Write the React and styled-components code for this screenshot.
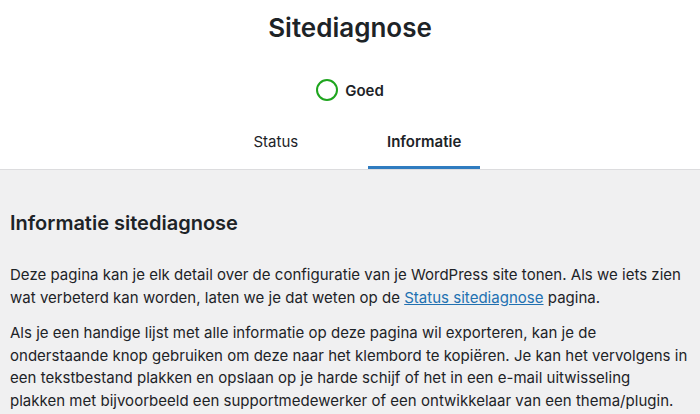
import React from "react";
import styled, { createGlobalStyle } from "styled-components";

const Global = createGlobalStyle`
  html, body { margin: 0; padding: 0; }
  body {
    background: #f0f0f1;
    font-family: Inter, "Noto Sans", sans-serif;
    color: #1d2327;
    width: 700px;
    height: 414px;
    overflow: hidden;
  }
`;

const Header = styled.header`
  background: #fff;
  border-bottom: 1px solid #dcdcde;
  text-align: center;
`;

const Title = styled.h1`
  margin: 0;
  padding-top: 13px;
  height: 29px;
  line-height: 29px;
  font-size: 26px;
  font-weight: 600;
  color: #1d2327;
`;

const StatusRow = styled.div`
  display: flex;
  align-items: center;
  justify-content: center;
  gap: 7px;
  margin-top: 28px;
  height: 40px;
`;

const Circle = styled.span`
  width: 18px;
  height: 18px;
  border: 2px solid #1ea51e;
  border-radius: 50%;
`;

const StatusLabel = styled.span`
  font-size: 15px;
  font-weight: 600;
`;

const Tabs = styled.nav`
  display: inline-grid;
  grid-template-columns: 1fr 1fr;
  margin-top: 12px;
`;

const Tab = styled.a`
  display: block;
  margin: 0 18px;
  padding: 9px 19px 16px;
  line-height: 22px;
  font-size: 15px;
  font-weight: ${(p) => (p.$active ? 600 : 400)};
  color: #1d2327;
  text-decoration: none;
  box-shadow: ${(p) => (p.$active ? "inset 0 -3px #2f7cc0" : "none")};
`;

const Body = styled.main`
  padding: 39px 0 0 10px;
`;

const Heading = styled.h2`
  margin: 0 0 27px;
  font-size: 20px;
  line-height: 28px;
  font-weight: 600;
`;

const Para = styled.p`
  margin: 0 0 13px;
  font-size: 15px;
  line-height: 22.6px;
  letter-spacing: 0.02px;
`;

const Link = styled.a`
  color: #2271b1;
  text-decoration: underline;
`;

export default function App() {
  return (
    <>
      <Global />
      <Header>
        <Title>Sitediagnose</Title>
        <StatusRow>
          <Circle />
          <StatusLabel>Goed</StatusLabel>
        </StatusRow>
        <Tabs>
          <Tab>Status</Tab>
          <Tab $active>Informatie</Tab>
        </Tabs>
      </Header>
      <Body>
        <Heading>Informatie sitediagnose</Heading>
        <Para>
          Deze pagina kan je elk detail over de configuratie van je WordPress site tonen. Als we iets zien
          <br />
          wat verbeterd kan worden, laten we je dat weten op de <Link>Status sitediagnose</Link> pagina.
        </Para>
        <Para>
          Als je een handige lijst met alle informatie op deze pagina wil exporteren, kan je de
          <br />
          onderstaande knop gebruiken om deze naar het klembord te kopiëren. Je kan het vervolgens in
          <br />
          een tekstbestand plakken en opslaan op je harde schijf of het in een e-mail uitwisseling
          <br />
          plakken met bijvoorbeeld een supportmedewerker of een ontwikkelaar van een thema/plugin.
        </Para>
      </Body>
    </>
  );
}
